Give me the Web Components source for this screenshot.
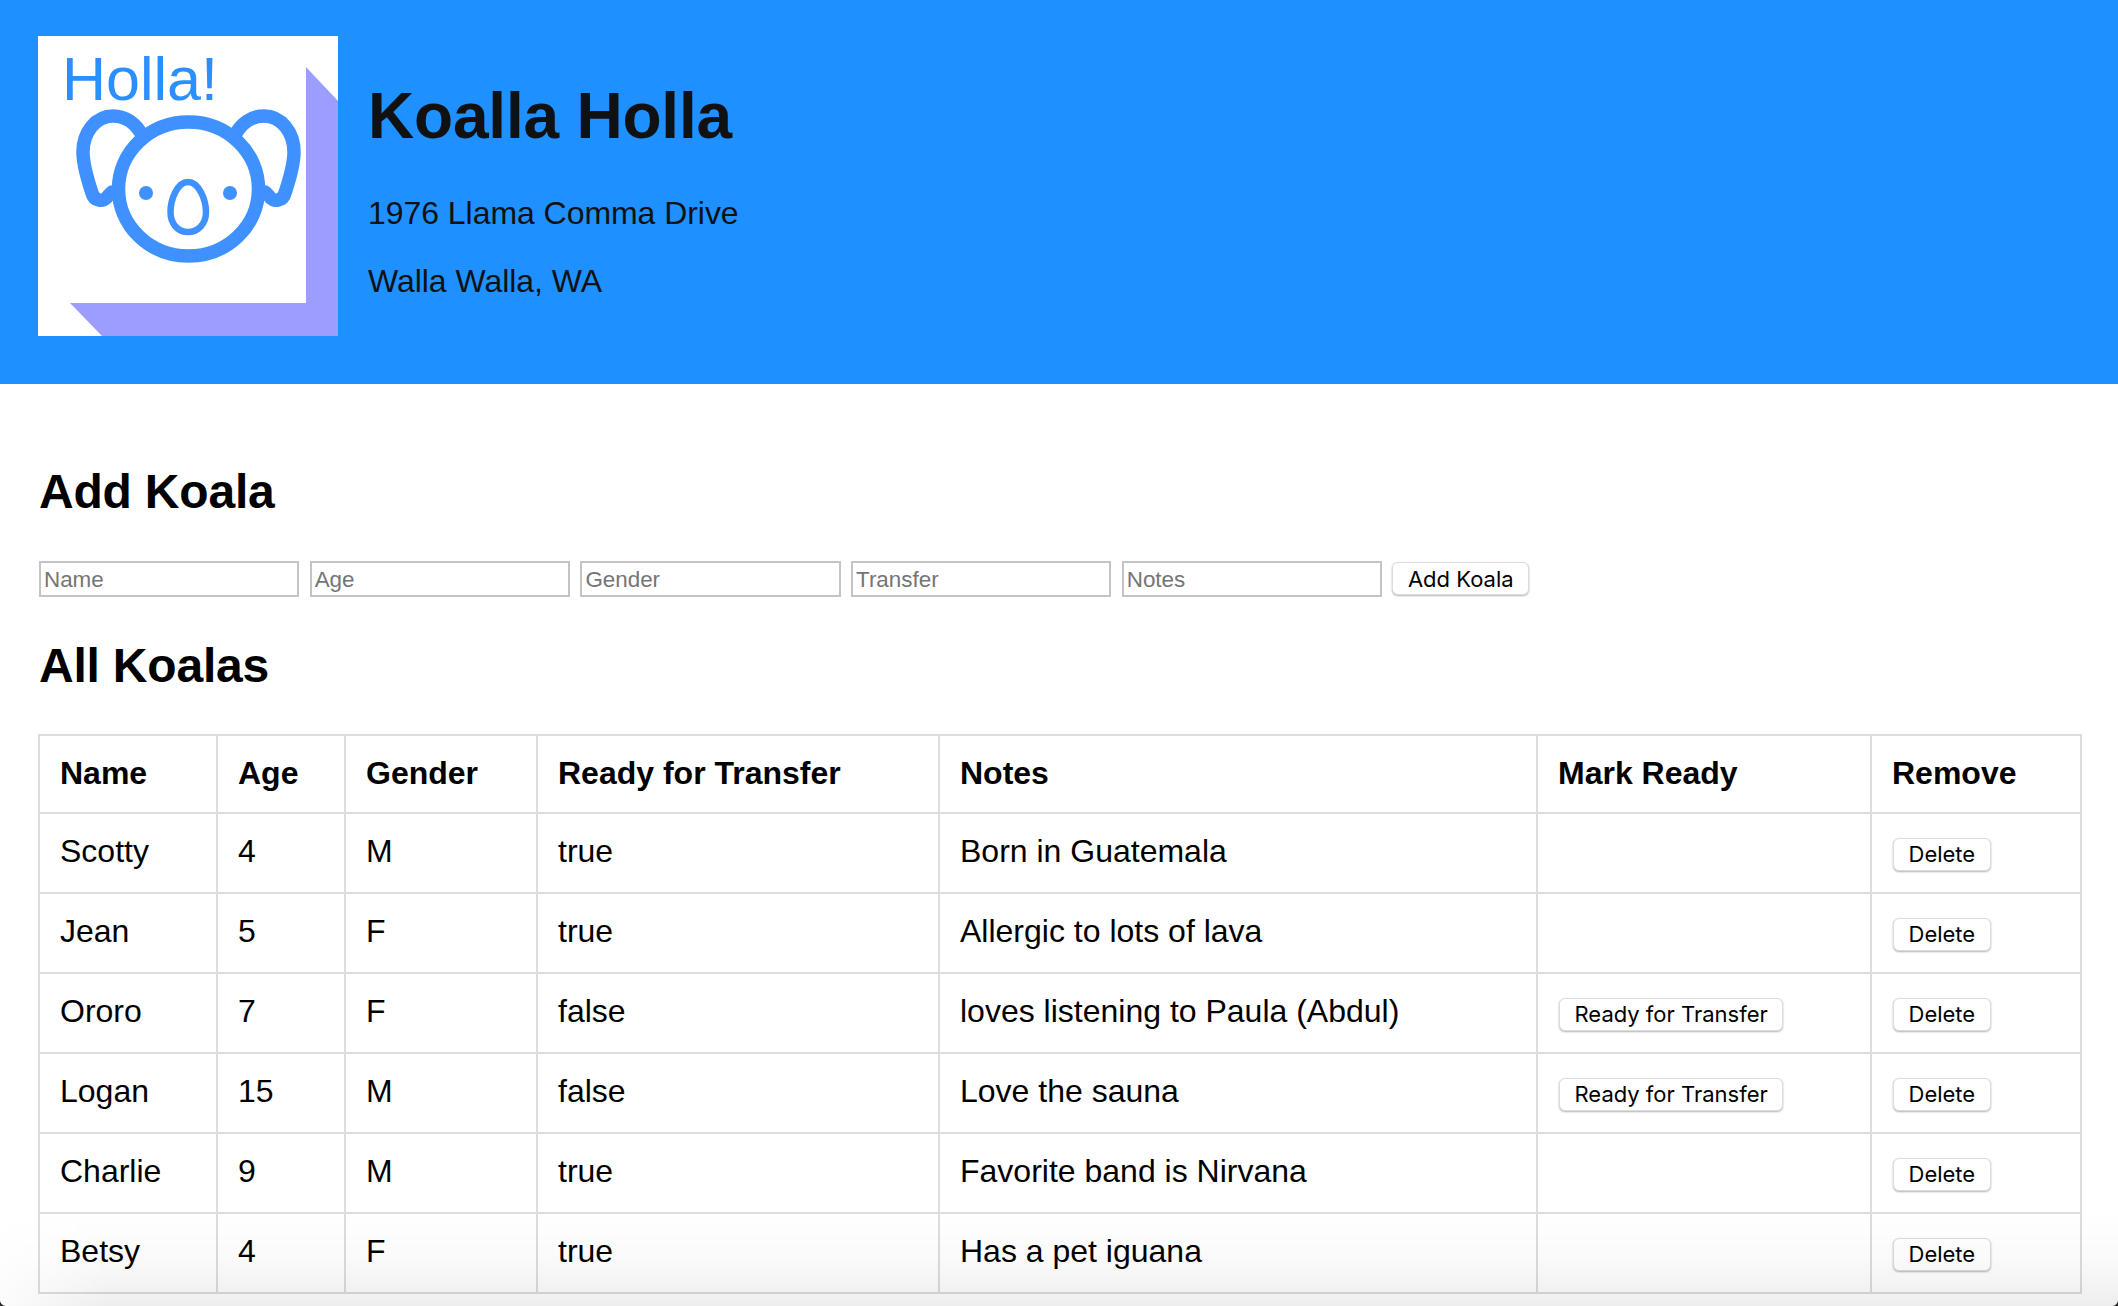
<!DOCTYPE html>
<html lang="en">
<head>
<meta charset="utf-8">
<title>Koalla Holla</title>
<style>
  html, body { margin: 0; height: 100%; background: #fff; }
  body { font-family: "Liberation Sans", Arial, sans-serif; font-size: 32px; color: #000; overflow: hidden; }
</style>
</head>
<body>
<koala-header name="Koalla Holla">
  <p>1976 Llama Comma Drive</p>
  <p>Walla Walla, WA</p>
</koala-header>
<koala-section heading="Add Koala"><koala-form></koala-form></koala-section>
<koala-section heading="All Koalas"><koala-table></koala-table></koala-section>
<koala-fade></koala-fade>

<script>
const koalas = [
  { name: 'Scotty', age: 4, gender: 'M', transfer: true, notes: 'Born in Guatemala' },
  { name: 'Jean', age: 5, gender: 'F', transfer: true, notes: 'Allergic to lots of lava' },
  { name: 'Ororo', age: 7, gender: 'F', transfer: false, notes: 'loves listening to Paula (Abdul)' },
  { name: 'Logan', age: 15, gender: 'M', transfer: false, notes: 'Love the sauna' },
  { name: 'Charlie', age: 9, gender: 'M', transfer: true, notes: 'Favorite band is Nirvana' },
  { name: 'Betsy', age: 4, gender: 'F', transfer: true, notes: 'Has a pet iguana' },
];

class KoalaLogo extends HTMLElement {
  constructor() {
    super();
    this.attachShadow({ mode: 'open' });
    this.shadowRoot.innerHTML = `
      <style>
        :host { display: block; width: 300px; height: 300px; flex: none; }
        svg { display: block; }
      </style>
      <svg width="300" height="300" viewBox="0 0 300 300">
        <rect width="300" height="300" fill="#fff"/>
        <polygon points="268,31 300,65 300,300 64,300 32,267 268,267" fill="#9d9dff"/>
        <text x="24" y="64" font-family="Liberation Sans, sans-serif" font-size="62" fill="#2b8fff" textLength="156" lengthAdjust="spacingAndGlyphs">Holla!</text>
        <g fill="none" stroke="#3f91ff" stroke-width="13.500" stroke-linecap="round" stroke-linejoin="round">
          <ellipse cx="150.5" cy="153" rx="70" ry="67"/>
          <path d="M104 99C98 88 88 80 75 80C58 80 45 96 45 116C45 130 50 145 54 157C56 165 66 167 70 160L74 156"/>
          <path d="M197 99C203 88 213 80 226 80C243 80 256 96 256 116C256 130 251 145 247 157C245 165 235 167 231 160L227 156"/>
          <path stroke-width="6.5" d="M150 146C139 146 132.500 164 132.500 176C132.500 188 140 196 150 196C160 196 168 188 168 176C168 164 161 146 150 146Z"/>
        </g>
        <circle cx="108" cy="157" r="7" fill="#3f91ff"/>
        <circle cx="192" cy="157" r="7" fill="#3f91ff"/>
      </svg>`;
  }
}
customElements.define('koala-logo', KoalaLogo);

class KoalaHeader extends HTMLElement {
  constructor() {
    super();
    this.attachShadow({ mode: 'open' });
    this.shadowRoot.innerHTML = `
      <style>
        :host { display: flex; gap: 30px; box-sizing: border-box; height: 384px; padding: 36px 38px 0; background: #1e90ff; color: #111; }
        h1 { margin: 43px 0 42px; font-size: 64px; line-height: 74px; font-weight: bold; letter-spacing: -.2px; }
        ::slotted(p) { margin: 32px 0; font-size: 32px; line-height: 36px; letter-spacing: -.05px; }
      </style>
      <koala-logo></koala-logo>
      <div>
        <h1></h1>
        <slot></slot>
      </div>`;
  }
  connectedCallback() {
    this.shadowRoot.querySelector('h1').textContent = this.getAttribute('name');
  }
}
customElements.define('koala-header', KoalaHeader);

class KoalaSection extends HTMLElement {
  constructor() {
    super();
    this.attachShadow({ mode: 'open' });
    this.shadowRoot.innerHTML = `
      <style>
        :host { display: block; padding: 0 38px; }
        h2 { margin: 41px 0 41px 1px; font-size: 48px; line-height: 55px; font-weight: bold; letter-spacing: -.2px; }
        :host(:first-of-type) h2 { margin-top: 80px; margin-bottom: 40px; }
      </style>
      <h2></h2>
      <slot></slot>`;
  }
  connectedCallback() {
    this.shadowRoot.querySelector('h2').textContent = this.getAttribute('heading');
  }
}
customElements.define('koala-section', KoalaSection);

class KoalaButton extends HTMLElement {
  constructor() {
    super();
    this.attachShadow({ mode: 'open' });
    this.shadowRoot.innerHTML = `
      <style>
        :host { display: inline-block; vertical-align: middle; }
        button {
          display: block; box-sizing: border-box; height: 33px; padding: 0 14.500px;
          font: 22px Inter, "Liberation Sans", sans-serif; color: #000; white-space: nowrap;
          background: #fff; border: 1px solid #dcdcdc; border-radius: 6px;
          box-shadow: 0 1px 2px rgba(0, 0, 0, .3);
        }
      </style>
      <button type="button"><slot></slot></button>`;
  }
}
customElements.define('koala-button', KoalaButton);

class KoalaForm extends HTMLElement {
  constructor() {
    super();
    this.attachShadow({ mode: 'open' });
    const fields = ['Name', 'Age', 'Gender', 'Transfer', 'Notes'];
    this.shadowRoot.innerHTML = `
      <style>
        :host { display: flex; align-items: flex-start; gap: 10.400px; margin: 42px 0 0 1px; }
        input {
          box-sizing: border-box; width: 260.300px; height: 36px; margin: 0; padding: 1px 3px 0;
          font: 22.400px "Liberation Sans", sans-serif; border: 2px solid #c4c4c4; border-radius: 0; background: #fff;
        }
        input::placeholder { color: #757575; opacity: 1; }
        koala-button { margin-top: 1px; }
      </style>
      ${fields.map(f => `<input type="text" placeholder="${f}">`).join('')}
      <koala-button>Add Koala</koala-button>`;
  }
}
customElements.define('koala-form', KoalaForm);

class KoalaTable extends HTMLElement {
  constructor() {
    super();
    this.attachShadow({ mode: 'open' });
    const cols = [178, 128, 192, 402, 598, 334, 210];
    const heads = ['Name', 'Age', 'Gender', 'Ready for Transfer', 'Notes', 'Mark Ready', 'Remove'];
    const rows = koalas.map(k => `
      <tr>
        <td>${k.name}</td>
        <td>${k.age}</td>
        <td>${k.gender}</td>
        <td>${k.transfer}</td>
        <td>${k.notes}</td>
        <td class="action">${k.transfer ? '' : '<koala-button>Ready for Transfer</koala-button>'}</td>
        <td class="action"><koala-button>Delete</koala-button></td>
      </tr>`).join('');
    this.shadowRoot.innerHTML = `
      <style>
        :host { display: block; }
        table { table-layout: fixed; width: 2042px; border-collapse: collapse; font-size: 32px; }
        th, td { box-sizing: border-box; padding: 0 20px 2px; border: 2px solid #ddd; text-align: left; vertical-align: middle; white-space: nowrap; }
        th { height: 78px; font-weight: bold; }
        td { height: 80px; padding-bottom: 4px; }
        td.action { padding-bottom: 2px; }
        koala-button { margin-left: 1px; }
      </style>
      <table>
        <colgroup>${cols.map(w => `<col style="width:${w}px">`).join('')}</colgroup>
        <thead><tr>${heads.map(h => `<th>${h}</th>`).join('')}</tr></thead>
        <tbody>${rows}</tbody>
      </table>`;
  }
}
customElements.define('koala-table', KoalaTable);

// window shadow along the bottom edge, with the rounded window corners
class KoalaFade extends HTMLElement {
  constructor() {
    super();
    this.attachShadow({ mode: 'open' });
    this.shadowRoot.innerHTML = `
      <style>
        :host { position: fixed; left: 0; right: 0; bottom: 0; height: 95px; pointer-events: none; }
        .shade {
          position: absolute; inset: 0;
          background: linear-gradient(rgba(0,0,0,0), rgba(0,0,0,.02) 50%, rgba(0,0,0,.065));
          -webkit-mask-image: linear-gradient(90deg, rgba(0,0,0,.2), #000 110px);
          mask-image: linear-gradient(90deg, rgba(0,0,0,.2), #000 110px);
        }
        .corner { position: absolute; bottom: 0; width: 6px; height: 6px; }
        .left { left: 0; background: radial-gradient(circle at top right, transparent 5.500px, #222 6.500px); }
        .right { right: 0; background: radial-gradient(circle at top left, transparent 5.500px, #222 6.500px); }
      </style>
      <div class="shade"></div>
      <div class="corner left"></div>
      <div class="corner right"></div>`;
  }
}
customElements.define('koala-fade', KoalaFade);
</script>
</body>
</html>
